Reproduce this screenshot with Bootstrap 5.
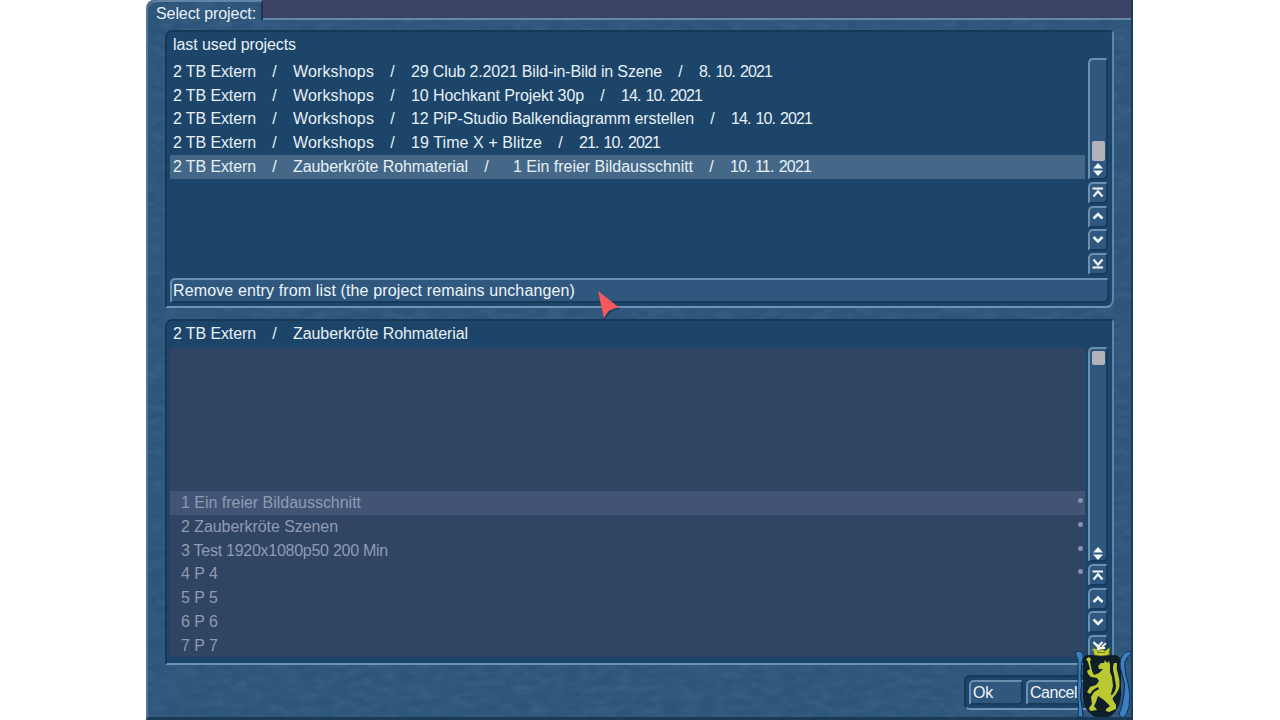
<!DOCTYPE html>
<html lang="en">
<head>
<meta charset="utf-8">
<title>Select project</title>
<link href="https://cdn.jsdelivr.net/npm/bootstrap@5.3.0/dist/css/bootstrap.min.css" rel="stylesheet">
<style>
body{background:#fff;font-family:"Liberation Sans",Arial,sans-serif;font-size:16px;line-height:24px;color:#e6f0f6;overflow:hidden}
.win{width:987px;height:720px;margin-left:146px;background:#2d5479;border-left:2px solid #55779c;border-right:2px solid #173c5c;border-bottom:3px solid #193b59;border-top-left-radius:8px;overflow:hidden}
.grain{position:absolute;inset:0;width:100%;height:100%;opacity:.13}
.tab-title{width:115px;height:20px;padding-left:8px;line-height:23px;border-top:2px solid #6484a5;border-right:2px solid #1c3557;border-top-left-radius:9px}
.backdrop{height:20px;background:#3c4265;border-bottom:2px solid #6388aa}
.well{background:#1d4569;border:2px solid #163957;border-right-color:#5c86a8;border-bottom-color:#7093b3;border-radius:7px 3px 8px 2px;margin:0 17px 0 17px}
.well-a{height:278px;margin-top:10px}
.well-b{height:346px;margin-top:11px}
.line{height:23.8px;line-height:24.5px;padding-left:3px;white-space:pre}
.line.sel{background:#456888}
.cut{width:37px;text-align:center}
.rows{width:915px;margin-left:3px}
.caption-line{height:27.75px;padding:1px 0 0 3px}
.path-line{height:27px;line-height:25px}
.dim{background:#304463;color:#8e9bb4}
.dim .line{padding-left:11px;padding-right:2px;line-height:24px}
.dim .line.sel{background:#415475}
.dot{width:5px;height:5px;border-radius:50%;background:#8792b0;margin-top:7px}
.raised{background:#30587e;border:2px solid #6c90b0;border-right-color:#173b5b;border-bottom-color:#173b5b;border-radius:5px 2px 5px 2px;color:#edf5fa}
.scroller{padding:26px 4px 0 0}
.track{width:20px;padding-bottom:2px}
.thumb{width:13px;background:#b2b2bb;border-radius:2px}
.step{width:20px;height:22px;margin-top:1.8px;padding:0}
.step svg,.track svg{display:block}
.remove{height:25px;width:939px;line-height:21px;padding:0 0 1px 1px;margin:3px 0 0 3px}
.actions{width:150px;height:35px;border-radius:6px;padding:3px 0 0 3px}
.actions .raised{height:25px;line-height:19px;padding:0 0 1px 2px}
.crest{left:926px;top:643px}
.pointer-red{left:447px;top:286px}
</style>
</head>
<body>
<main class="win position-relative d-flex flex-column">
<svg class="grain" aria-hidden="true"><filter id="n" x="0" y="0" width="100%" height="100%"><feTurbulence type="fractalNoise" baseFrequency=".06 .14" numOctaves="4" seed="4"/><feColorMatrix values="0 0 0 0 .3  0 0 0 0 .49  0 0 0 0 .65  1.6 0 0 0 -.5"/></filter><rect width="100%" height="100%" filter="url(#n)"/></svg>
<header class="d-flex position-relative flex-shrink-0">
<div class="tab-title"><span data-w="100">Select project:</span></div><div class="backdrop flex-grow-1"></div>
</header>

<section class="well well-a position-relative flex-shrink-0 d-flex flex-column">
<div class="d-flex justify-content-between">
<div class="rows">
<div class="caption-line"><span data-w="123">last used projects</span></div>
<div class="line d-flex"><span data-w="83">2 TB Extern</span><span class="cut">/</span><span data-w="81">Workshops</span><span class="cut">/</span><span data-w="251">29 Club 2.2021 Bild-in-Bild in Szene</span><span class="cut">/</span><span data-w="73" data-gap="1.5">8. 10. 2021</span></div>
<div class="line d-flex"><span data-w="83">2 TB Extern</span><span class="cut">/</span><span data-w="81">Workshops</span><span class="cut">/</span><span data-w="173">10 Hochkant Projekt 30p</span><span class="cut">/</span><span data-w="81" data-gap="1.5">14. 10. 2021</span></div>
<div class="line d-flex"><span data-w="83">2 TB Extern</span><span class="cut">/</span><span data-w="81">Workshops</span><span class="cut">/</span><span data-w="283">12 PiP-Studio Balkendiagramm erstellen</span><span class="cut">/</span><span data-w="81" data-gap="1.5">14. 10. 2021</span></div>
<div class="line d-flex"><span data-w="83">2 TB Extern</span><span class="cut">/</span><span data-w="81">Workshops</span><span class="cut">/</span><span data-w="131">19 Time X + Blitze</span><span class="cut">/</span><span data-w="81" data-gap="1.5">21. 10. 2021</span></div>
<div class="line sel d-flex"><span data-w="83">2 TB Extern</span><span class="cut">/</span><span data-w="175">Zauberkröte Rohmaterial</span><span class="cut">/</span><span class="ms-2" data-w="180">1 Ein freier Bildausschnitt</span><span class="cut">/</span><span data-w="81" data-gap="1.5">10. 11. 2021</span></div>
</div>
<div class="scroller d-flex flex-column">
<div class="track raised d-flex flex-column align-items-center justify-content-end" style="height:122px"><div class="thumb" style="height:20px;margin-bottom:2px"></div><svg width="12" height="13"><path d="M6 0 11 5.5H1ZM1 7.5H11L6 13Z" fill="#f4f9fc"/></svg></div>
<button class="step raised"><svg width="16" height="18" fill="none" stroke="#eef6fa" stroke-width="2.2"><path d="M2.5 4.5H13M3.5 12.5 8 7.2 12.5 12.5"/></svg></button>
<button class="step raised"><svg width="16" height="18" fill="none" stroke="#eef6fa" stroke-width="2.6"><path d="M3.500 10.500 8 6 12.500 10.500"/></svg></button>
<button class="step raised"><svg width="16" height="18" fill="none" stroke="#eef6fa" stroke-width="2.6"><path d="M3.500 6 8 10.500 12.500 6"/></svg></button>
<button class="step raised"><svg width="16" height="18" fill="none" stroke="#eef6fa" stroke-width="2.2"><path d="M3.500 4.500 8 9.800 12.500 4.500M2.500 12.500H13"/></svg></button>
</div>
</div>
<button class="remove raised text-start"><span data-w="402">Remove entry from list (the project remains unchangen)</span></button>
</section>

<section class="well well-b position-relative flex-shrink-0 d-flex justify-content-between">
<div class="rows">
<div class="line path-line d-flex"><span data-w="83">2 TB Extern</span><span class="cut">/</span><span data-w="175">Zauberkröte Rohmaterial</span></div>
<div class="dim" style="height:309px;padding-top:143px">
<div class="line sel d-flex justify-content-between"><span data-w="180">1 Ein freier Bildausschnitt</span><i class="dot"></i></div>
<div class="line d-flex justify-content-between"><span data-w="157">2 Zauberkröte Szenen</span><i class="dot"></i></div>
<div class="line d-flex justify-content-between"><span data-w="207">3 Test 1920x1080p50 200 Min</span><i class="dot"></i></div>
<div class="line d-flex justify-content-between"><span data-w="37">4 P 4</span><i class="dot"></i></div>
<div class="line d-flex"><span data-w="37">5 P 5</span></div>
<div class="line d-flex"><span data-w="37">6 P 6</span></div>
<div class="line d-flex"><span data-w="37">7 P 7</span></div>
</div>
</div>
<div class="scroller d-flex flex-column">
<div class="track raised d-flex flex-column align-items-center justify-content-between" style="height:215px;padding-top:2px;padding-bottom:0"><div class="thumb" style="height:14px"></div><svg width="12" height="13"><path d="M6 0 11 5.500H1ZM1 7.500H11L6 13Z" fill="#f4f9fc"/></svg></div>
<button class="step raised"><svg width="16" height="18" fill="none" stroke="#eef6fa" stroke-width="2.2"><path d="M2.500 5.500H13M3.500 13.500 8 8.200 12.500 13.500"/></svg></button>
<button class="step raised"><svg width="16" height="18" fill="none" stroke="#eef6fa" stroke-width="2.6"><path d="M3.500 12 8 7.500 12.500 12"/></svg></button>
<button class="step raised"><svg width="16" height="18" fill="none" stroke="#eef6fa" stroke-width="2.6"><path d="M3.500 6.500 8 11 12.500 6.500"/></svg></button>
<button class="step raised"><svg width="16" height="18" fill="none" stroke="#eef6fa" stroke-width="2.2"><path d="M3.500 5 8 9.800 12.500 5M2.500 13H13"/></svg></button>
</div>
</section>

<footer class="position-relative d-flex justify-content-end" style="padding:10px 17px 0 0">
<div class="well actions d-flex m-0" style="gap:3px"><button class="raised text-start" style="width:54px"><span data-w="20">Ok</span></button><button class="raised text-start" style="width:83px"><span data-w="47">Cancel</span></button></div>
</footer>

<svg class="pointer-red position-absolute" width="32" height="36"><path d="M4 8 26 23 16 26 9 35Z" fill="#102f4b" opacity=".5"/><path d="M3 5 24 21.500Q13 22 9 32.500Z" fill="#f5585d"/></svg>

<svg class="crest position-absolute" width="60" height="76" viewBox="0 0 60 76">
<path d="M9 18Q8 12 15 12H40Q47 12 47 20V52Q46 66 37 73Q28 77 19 73Q9 66 9 53Z" fill="#0c1d27" opacity=".96"/>
<path d="M1 10Q6 6 9 11 10 14 8 18 6 31 7.500 42 5 54 8 64L9 74H5L4 72Q5 63 4 57 3 45 4 35L4 18Q3 13 1 10Z" fill="#3a80c4" stroke="#122e4b"/>
<path d="M57 9Q52 7 48 13 44 20 48 31 52 41 50 51 49 61 45 72L49 75Q53 72 55 64 57 51 54 40 50 27 51 19 53 13 57 11Z" fill="#3a80c4" stroke="#122e4b"/>
<path d="M19 4 24 8 28 6 31 8 36 4 35 12Q27 14 20 12Z" fill="#c9cd2d" stroke="#4c5928" stroke-width=".7"/>
<path d="M20 0 26 4M32 0 28 4M23 5H31" stroke="#f4f5df" stroke-width="1.800"/><path d="M23 9.500H31" stroke="#6f7a25"/>
<path d="M12 16 15 14 17 16 16 19 18 28 20 32 25 30 29 26 25 26 24 23 27 20 30 20 31 17 33 20 35 18 36 22 36 29 38 34 39 43 37 51 39 57 42 62 42 66 35 69 32 68 32 66 36 63 30 57 24 53 22 59 20 63 23 67 16 68 15 65 18 61 17 54 20 49 25 46 24 44 19 47 16 51 13 49 16 44 22 42 25 38 23 35 17 34 14 31 13 28 16 26 14 19Z" fill="#bac832"/>
<path d="M36 54Q42 49 42 43 41 37 40 31 38 25 40 20L43 20Q42 26 44 31 48 44 42 51L38 56Z" fill="#bac832"/>
</svg>
</main>
<script src="https://cdn.jsdelivr.net/npm/bootstrap@5.3.0/dist/js/bootstrap.bundle.min.js"></script>
<script>
document.querySelectorAll('[data-w]').forEach(function (s) {
  s.style.whiteSpace = 'pre';
  if (s.dataset.gap) s.style.wordSpacing = s.dataset.gap + 'px';
  var w = s.getBoundingClientRect().width;
  s.style.letterSpacing = ((+s.dataset.w - w) / s.textContent.length) + 'px';
});
</script>
</body>
</html>
